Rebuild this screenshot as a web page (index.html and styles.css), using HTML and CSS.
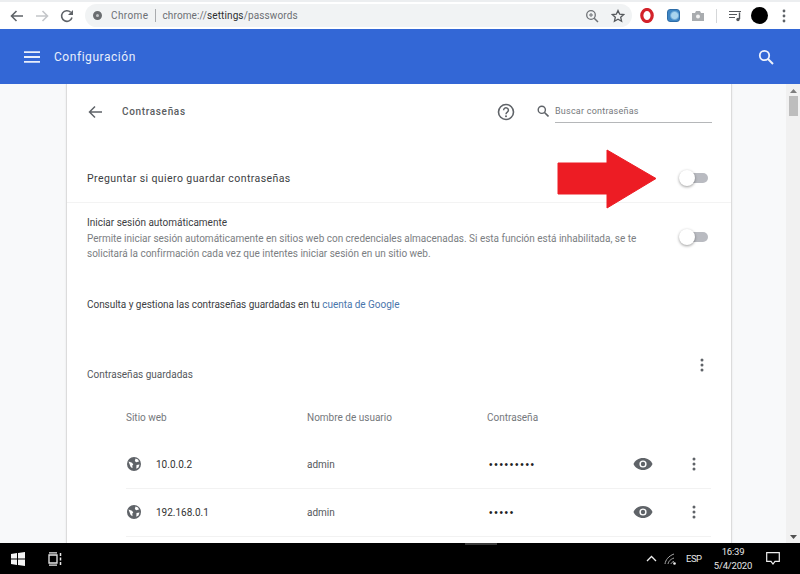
FILE: index.html
```html
<!DOCTYPE html>
<html lang="es">
<head>
    <meta charset="UTF-8">
    <title>Configuración - Contraseñas</title>
    <link rel="stylesheet" href="styles.css">
</head>
<body>
    <div class="toolbar">
        <svg class="nav-icon" width="16" height="16" viewBox="0 0 16 16"><path d="M14 8H3M7.5 3L2.5 8l5 5" fill="none" stroke="#5f6368" stroke-width="1.6"/></svg>
        <svg class="nav-icon forward" width="16" height="16" viewBox="0 0 16 16"><path d="M2 8h11M8.500 3l5 5-5 5" fill="none" stroke="#c4c6c9" stroke-width="1.6"/></svg>
        <svg class="nav-icon reload" width="16" height="16" viewBox="0 0 16 16"><path d="M13 9.500A5.300 5.300 0 1 1 11.700 4.300" fill="none" stroke="#5f6368" stroke-width="1.600"/><path d="M14 2v5H9z" fill="#5f6368"/></svg>
        <div class="omnibox">
            <span class="site-dot"></span>
            <span class="site-name">Chrome</span>
            <span class="site-sep"></span>
            <span class="url">chrome://<b>settings</b>/passwords</span>
            <svg class="zoom-icon" width="14" height="14" viewBox="0 0 14 14"><circle cx="6" cy="6" r="4.300" fill="none" stroke="#6f7276" stroke-width="1.300"/><path d="M9.200 9.200L13 13" stroke="#6f7276" stroke-width="1.500"/><path d="M6 4v4M4 6h4" stroke="#6f7276"/></svg>
            <svg class="star-icon" width="14" height="14" viewBox="0 0 14 14"><path d="M7 1.500l1.700 3.700 4 .4-3 2.700.9 4L7 10.300l-3.600 2 .9-4-3-2.700 4-.4z" fill="none" stroke="#55585c" stroke-width="1.300"/></svg>
        </div>
        <div class="extensions">
            <svg class="ext-opera" width="14" height="15" viewBox="0 0 14 15"><ellipse cx="7" cy="7.500" rx="5.200" ry="6" fill="none" stroke="#d3222a" stroke-width="3.200"/></svg>
            <span class="ext-blue"></span>
            <svg class="ext-camera" width="14" height="12" viewBox="0 0 14 12"><path d="M1 3h3l1-2h4l1 2h3v8H1z" fill="#a9acaf"/><circle cx="7" cy="6.500" r="2" fill="#f3f3f3"/></svg>
            <span class="ext-sep"></span>
            <svg class="ext-music" width="14" height="12" viewBox="0 0 14 12"><path d="M1 1.500h12M1 4.500h8M1 7.500h6" stroke="#55585c" stroke-width="1.200"/><path d="M11.500 2.500V9" stroke="#55585c" stroke-width="1.400"/><circle cx="10" cy="9.500" r="1.700" fill="#55585c"/></svg>
            <span class="avatar"></span>
            <svg class="ext-more" width="4" height="14" viewBox="0 0 4 14"><circle cx="2" cy="2" r="1.400" fill="#5f6368"/><circle cx="2" cy="7" r="1.400" fill="#5f6368"/><circle cx="2" cy="12" r="1.400" fill="#5f6368"/></svg>
        </div>
    </div>

    <header class="app-bar">
        <svg width="16" height="12" viewBox="0 0 16 12"><path d="M0 1.200h16M0 6h16M0 10.800h16" stroke="#e8eefb" stroke-width="1.800"/></svg>
        <span class="app-title">Configuración</span>
        <svg class="app-search" width="16" height="16" viewBox="0 0 16 16"><circle cx="6.500" cy="6.500" r="4.700" fill="none" stroke="#eef2fc" stroke-width="1.800"/><path d="M10 10l5 5" stroke="#eef2fc" stroke-width="2"/></svg>
    </header>

    <div class="content">
        <main class="card">
            <div class="card-head">
                <svg class="back" width="16" height="16" viewBox="0 0 16 16"><path d="M15 8H2.500M8 2.500L2.500 8 8 13.500" fill="none" stroke="#5f6368" stroke-width="1.500"/></svg>
                <h1 class="card-title">Contraseñas</h1>
                <svg class="help" width="18" height="18" viewBox="0 0 18 18"><circle cx="9" cy="9" r="7.500" fill="none" stroke="#5f6368" stroke-width="1.600"/><path d="M6.600 7.200a2.400 2.400 0 1 1 3.700 2c-.9.600-1.300 1-1.300 2" fill="none" stroke="#5f6368" stroke-width="1.500"/><circle cx="9" cy="13.300" r="1" fill="#5f6368"/></svg>
                <div class="search-box">
                    <svg width="12" height="12" viewBox="0 0 12 12"><circle cx="4.800" cy="4.800" r="3.600" fill="none" stroke="#5f6368" stroke-width="1.400"/><path d="M7.500 7.500L11.500 11.500" stroke="#5f6368" stroke-width="1.600"/></svg>
                    <span class="search-text">Buscar contraseñas</span>
                </div>
            </div>

            <div class="row row-ask">
                <span>Preguntar si quiero guardar contraseñas</span>
                <span class="toggle"></span>
            </div>

            <div class="row row-auto">
                <div class="row-text">
                    <div>Iniciar sesión automáticamente</div>
                    <div class="secondary">Permite iniciar sesión automáticamente en sitios web con credenciales almacenadas. Si esta función está inhabilitada, se te solicitará la confirmación cada vez que intentes iniciar sesión en un sitio web.</div>
                </div>
                <span class="toggle"></span>
            </div>

            <p class="account-line">Consulta y gestiona las contraseñas guardadas en tu <a href="#">cuenta de Google</a></p>

            <div class="saved-head">
                <span>Contraseñas guardadas</span>
                <svg width="4" height="14" viewBox="0 0 4 14"><circle cx="2" cy="2" r="1.500" fill="#5f6368"/><circle cx="2" cy="7" r="1.500" fill="#5f6368"/><circle cx="2" cy="12" r="1.500" fill="#5f6368"/></svg>
            </div>

            <div class="pw-table">
                <div class="pw-row pw-labels">
                    <span>Sitio web</span>
                    <span>Nombre de usuario</span>
                    <span>Contraseña</span>
                </div>
                <div class="pw-row pw-entry">
                    <span class="pw-site">
                        <svg width="14" height="14" viewBox="0 0 14 14"><circle cx="7" cy="7" r="7" fill="#5f6368"/><path d="M1.500 4.500l3.500 1.200 1.300 1.700-1 1.200.2 2.600-1.800-1.200zM8.500 1.500l2.500.9 1 2-2.800.8-1.400-1.300zM9.500 8l3-.4-1 3-2.200 1.100z" fill="#fff"/></svg>
                        10.0.0.2
                    </span>
                    <span>admin</span>
                    <span class="dots">•••••••••</span>
                    <svg class="eye" width="20" height="14" viewBox="0 0 20 14"><path d="M10 1C5.500 1 2 3.500 .5 7 2 10.500 5.500 13 10 13s8-2.500 9.500-6C18 3.500 14.500 1 10 1z" fill="#5f6368"/><circle cx="10" cy="7" r="3.600" fill="#fff"/><circle cx="10" cy="7" r="2.200" fill="#5f6368"/></svg>
                    <svg class="more" width="4" height="14" viewBox="0 0 4 14"><circle cx="2" cy="2" r="1.500" fill="#5f6368"/><circle cx="2" cy="7" r="1.500" fill="#5f6368"/><circle cx="2" cy="12" r="1.500" fill="#5f6368"/></svg>
                </div>
                <div class="pw-row pw-entry">
                    <span class="pw-site">
                        <svg width="14" height="14" viewBox="0 0 14 14"><circle cx="7" cy="7" r="7" fill="#5f6368"/><path d="M1.500 4.500l3.500 1.200 1.300 1.700-1 1.200.2 2.600-1.800-1.200zM8.500 1.500l2.500.9 1 2-2.800.8-1.400-1.300zM9.500 8l3-.4-1 3-2.200 1.100z" fill="#fff"/></svg>
                        192.168.0.1
                    </span>
                    <span>admin</span>
                    <span class="dots">•••••</span>
                    <svg class="eye" width="20" height="14" viewBox="0 0 20 14"><path d="M10 1C5.500 1 2 3.500 .5 7 2 10.500 5.500 13 10 13s8-2.500 9.500-6C18 3.500 14.500 1 10 1z" fill="#5f6368"/><circle cx="10" cy="7" r="3.600" fill="#fff"/><circle cx="10" cy="7" r="2.200" fill="#5f6368"/></svg>
                    <svg class="more" width="4" height="14" viewBox="0 0 4 14"><circle cx="2" cy="2" r="1.500" fill="#5f6368"/><circle cx="2" cy="7" r="1.500" fill="#5f6368"/><circle cx="2" cy="12" r="1.500" fill="#5f6368"/></svg>
                </div>
            </div>
        </main>

        <div class="scrollbar">
            <svg width="7" height="4" viewBox="0 0 7 4"><path d="M3.500 0L7 4H0z" fill="#7d7d7d"/></svg>
            <span class="scroll-thumb"></span>
            <svg class="scroll-down" width="7" height="4" viewBox="0 0 7 4"><path d="M0 0h7L3.500 4z" fill="#505050"/></svg>
        </div>

        <svg class="red-arrow" width="101" height="60" viewBox="0 0 101 60"><path d="M1 14h49V1l49 28.500L50 59V45H1z" fill="#ed1c24" stroke="#ed1c24" stroke-linejoin="round"/></svg>
    </div>

    <footer class="taskbar">
        <span class="task-mark"></span>
        <svg class="win-logo" width="14" height="14" viewBox="0 0 14 14"><path d="M0 2l6-.9v5.500H0zM7 1l7-1v6.600H7zM0 7.400h6v5.500L0 12zM7 7.400h7V14l-7-1z" fill="#f4f4f4"/></svg>
        <svg class="task-view" width="15" height="14" viewBox="0 0 15 14"><path d="M1 3h8v8H1zM1 .8h8M1 13.200h8" fill="none" stroke="#e8e8e8" stroke-width="1.300"/><path d="M12.500 1v3M12.500 5.500v3M12.500 10v3" stroke="#e8e8e8" stroke-width="1.500"/></svg>
        <div class="tray">
            <svg width="11" height="7" viewBox="0 0 11 7"><path d="M1 6l4.500-4.500L10 6" fill="none" stroke="#eee" stroke-width="1.300"/></svg>
            <svg class="wifi" width="14" height="12" viewBox="0 0 14 12"><path d="M2 11C2.500 7 5.500 3 11 1M5 11c.5-2.500 2-4.500 6-6M8 11c.2-1 1-2 3-2.500" fill="none" stroke="#aaa" stroke-width="1"/><circle cx="11.500" cy="10.500" r="1.300" fill="#eee"/></svg>
            <span class="lang">ESP</span>
            <span class="clock">16:39<br>5/4/2020</span>
            <svg class="notif" width="14" height="13" viewBox="0 0 14 13"><path d="M.700 .700h12.600v8.600H9L7 12 5 9.300H.700z" fill="none" stroke="#eee" stroke-width="1.200"/></svg>
        </div>
    </footer>
</body>
</html>
```
FILE: styles.css
```css
* {
    box-sizing: border-box;
}
html, body {
    margin: 0;
    height: 574px;
    overflow: hidden;
}
body {
    font-family: Roboto, "Liberation Sans", sans-serif;
    font-size: 10px;
    color: #3c4043;
    background: #f8f9fa;
    display: flex;
    flex-direction: column;
}

/* browser toolbar */
.toolbar {
    height: 29px;
    background: #fff;
    border-top: 2px solid #eceef0;
    display: flex;
    align-items: center;
    padding-left: 9px;
    padding-right: 7px;
}
.nav-icon {
    flex: none;
    margin-right: 9px;
}
.reload {
    margin-right: 10px;
}
.omnibox {
    width: 547px;
    height: 23px;
    background: #f1f3f4;
    border-radius: 12px;
    display: flex;
    align-items: center;
    padding-left: 8px;
    font-size: 10px;
    color: #6c6f73;
}
.site-dot {
    width: 9px;
    height: 9px;
    border-radius: 50%;
    border: 3px solid #6a6d70;
    background: #c4c6c8;
    margin-right: 9px;
}
.site-name {
    letter-spacing: .4px;
}
.site-sep {
    width: 1px;
    height: 13px;
    background: #a9abae;
    margin: 0 6px 0 7px;
}
.url {
    letter-spacing: .12px;
    flex: 1;
}
.url b {
    font-weight: 400;
    color: #2c2e31;
}
.zoom-icon {
    margin-right: 12px;
}
.star-icon {
    margin-right: 7px;
}
.extensions {
    flex: 1;
    display: flex;
    align-items: center;
    padding-left: 8px;
}
.ext-blue {
    width: 13px;
    height: 13px;
    margin-left: 13px;
    border-radius: 3px;
    background: radial-gradient(circle at 60% 50%, #a9d4ee 0 3px, #3f86c4 5px);
    border: 1px solid #2d6da8;
}
.ext-camera {
    margin-left: 11px;
}
.ext-sep {
    width: 1px;
    height: 14px;
    margin-left: 11px;
    background: #d5d7d9;
}
.ext-music {
    margin-left: 11px;
}
.avatar {
    width: 17px;
    height: 17px;
    border-radius: 50%;
    background: #000;
    margin-left: 9px;
}
.ext-more {
    margin-left: 14px;
}

/* blue app bar */
.app-bar {
    height: 55px;
    background: #3367d6;
    display: flex;
    align-items: center;
    padding: 0 26px 0 24px;
    color: #e8eefb;
    flex: none;
}
.app-title {
    margin-left: 14px;
    font-size: 12px;
    letter-spacing: .55px;
    flex: 1;
}

/* settings page */
.content {
    height: 459px;
    position: relative;
    display: flex;
    justify-content: space-between;
    overflow: hidden;
    padding-left: 66px;
}
.card {
    width: 666px;
    background: #fff;
    border-left: 1px solid #dcdcdc;
    border-right: 1px solid #dcdcdc;
    box-shadow: 0 0 2px rgba(0,0,0,.08);
}
.card-head {
    height: 56px;
    display: flex;
    align-items: center;
    padding-left: 20px;
}
.card-title {
    margin: -2px 0 0 19px;
    font-size: 10px;
    font-weight: 500;
    color: #5a5d61;
    letter-spacing: .66px;
    width: 375px;
    flex: none;
}
.help {
    margin-right: 22px;
}
.search-box {
    width: 175px;
    height: 26px;
    display: flex;
    align-items: flex-start;
    gap: 6px;
    margin-top: 1px;
}
.search-box svg {
    margin-top: 5px;
}
.search-text {
    flex: 1;
    font-size: 9px;
    color: #75787c;
    letter-spacing: .23px;
    line-height: 22px;
    border-bottom: 1px solid #b5b7b9;
}
.row {
    display: flex;
    align-items: center;
    justify-content: space-between;
    padding: 0 23px 0 20px;
}
.row-ask {
    height: 63px;
    padding-top: 14px;
    border-bottom: 1px solid #f3f3f3;
    font-size: 10.5px;
    letter-spacing: .42px;
}
.row-auto {
    padding-top: 12px;
    align-items: flex-start;
}
.row-text {
    width: 565px;
    line-height: 15.500px;
}
.secondary {
    color: #7b7e82;
    letter-spacing: -.01px;
}
.toggle {
    position: relative;
    width: 28px;
    height: 10px;
    border-radius: 5px;
    background: #b9bbc1;
    flex: none;
}
.row-auto .toggle {
    margin-top: 17px;
}
.toggle::before {
    content: "";
    position: absolute;
    left: -1px;
    top: -3px;
    width: 16px;
    height: 16px;
    border-radius: 50%;
    background: #fff;
    box-shadow: 0 1px 3px rgba(0,0,0,.4);
}
.account-line {
    margin: 35px 0 0 20px;
    line-height: 15px;
    color: #3c4043;
    letter-spacing: -.04px;
}
.account-line a {
    color: #4a76ac;
    text-decoration: none;
}
.saved-head {
    margin-top: 45px;
    height: 23px;
    display: flex;
    justify-content: space-between;
    padding: 0 27px 0 20px;
    color: #55585c;
    align-items: flex-end;
}
.saved-head svg {
    margin-bottom: 8px;
}
.pw-table {
    margin: 14px 20px 0 59px;
}
.pw-row {
    display: grid;
    grid-template-columns: 181px 180px 1fr 20px 4px;
    padding-right: 27px;
    align-items: center;
}
.pw-labels {
    height: 47px;
    color: #75787c;
}
.pw-entry {
    height: 48px;
    border-bottom: 1px solid #f2f2f2;
    color: #55585c;
}
.pw-site {
    display: flex;
    align-items: center;
    gap: 15px;
    color: #333;
    padding-left: 1px;
}
.dots {
    color: #222;
    font-size: 10px;
    letter-spacing: 1.7px;
    padding-left: 2px;
    font-family: "Liberation Sans", sans-serif;
}
.eye {
    margin-left: -27px;
}
.more {
    margin-left: 12px;
}
.scrollbar {
    width: 14px;
    background: #f1f1f1;
    display: flex;
    flex-direction: column;
    align-items: center;
    padding-top: 5px;
    padding-bottom: 4px;
}
.scroll-thumb {
    width: 9px;
    height: 20px;
    background: #bdbdbd;
    margin-top: 3px;
}
.scroll-down {
    margin-top: auto;
}
.red-arrow {
    position: absolute;
    left: 557px;
    top: 65px;
}

/* windows taskbar */
.taskbar {
    position: relative;
    height: 31px;
    background: #000;
    color: #e6e6e6;
    display: flex;
    align-items: center;
    padding-left: 11px;
    flex: none;
}
.task-mark {
    position: absolute;
    left: 465px;
    top: 0;
    width: 32px;
    height: 2px;
    background: #3a3a3a;
}
.task-view {
    margin-left: 23px;
}
.tray {
    margin-left: auto;
    display: flex;
    align-items: center;
    padding-right: 20px;
}
.wifi {
    margin-left: 6px;
}
.lang {
    margin-left: 9px;
    width: 14px;
    font-size: 9.500px;
    letter-spacing: -.5px;
    white-space: nowrap;
}
.clock {
    margin-left: 12px;
    width: 42px;
    text-align: center;
    font-size: 9.500px;
    letter-spacing: -.2px;
    line-height: 14px;
}
.notif {
    margin-left: 12px;
}
```
